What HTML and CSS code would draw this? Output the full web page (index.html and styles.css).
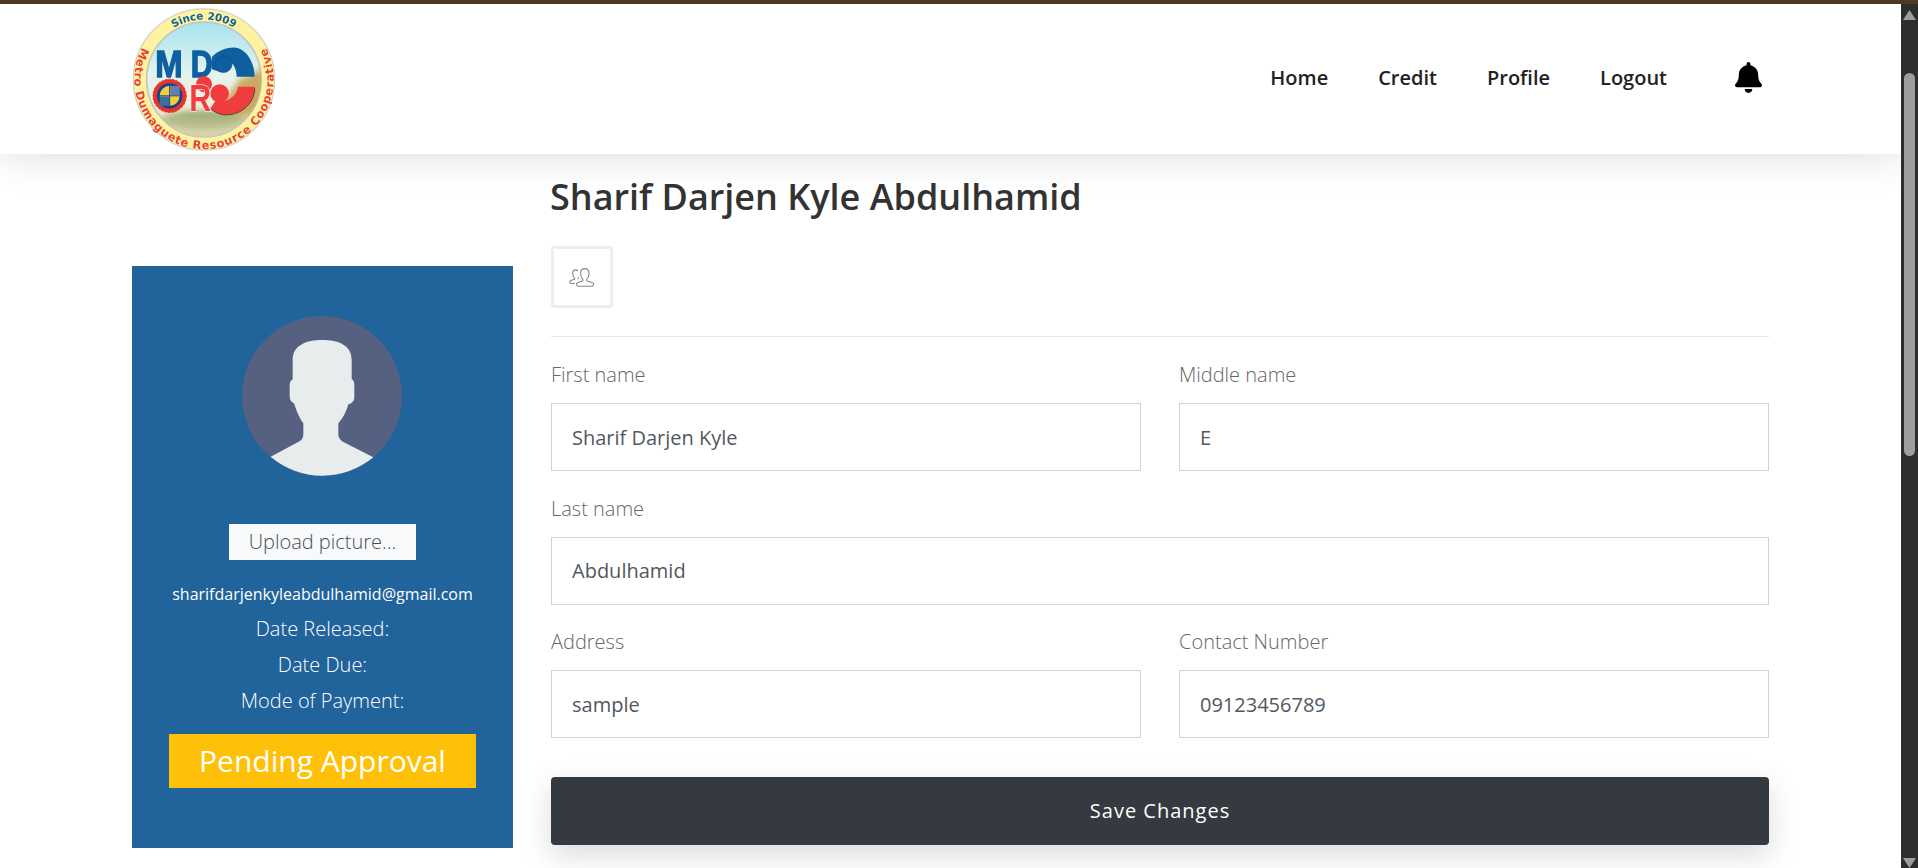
FILE: index.html
```html
<!DOCTYPE html>
<html lang="en">
<head>
<meta charset="utf-8">
<title>Profile</title>
<link rel="stylesheet" href="styles.css">
</head>
<body>
<div class="top-strip"></div>
<div class="window">
  <div class="page">
    <header class="site-header">
      <div class="header-inner">
        <svg class="logo" viewBox="25 22 426 428" aria-label="Metro Dumaguete Resource Cooperative logo">
          <defs>
            <clipPath id="innerClip"><circle cx="238" cy="236" r="172"/></clipPath>
            <linearGradient id="sky" x1="0" y1="0" x2="0" y2="1">
              <stop offset="0" stop-color="#a6e3f0"/>
              <stop offset="0.45" stop-color="#e4f3ee"/>
              <stop offset="0.7" stop-color="#f2eeda"/>
              <stop offset="1" stop-color="#d9d3ae"/>
            </linearGradient>
            <filter id="soft"><feGaussianBlur stdDeviation="10"/></filter>
            <filter id="crisp"><feGaussianBlur stdDeviation="1.5"/></filter>
            <path id="sinceArc" d="M58 236A180 180 0 0 1 418 236"/>
            <path id="nameArc" d="M55 135A209 209 0 1 0 421 135"/>
          </defs>
          <g filter="url(#crisp)">
            <circle cx="238" cy="236" r="212" fill="#fdf3a0" stroke="#d4d4c6" stroke-width="4"/>
            <circle cx="238" cy="236" r="172" fill="url(#sky)" stroke="#c4c6c0" stroke-width="5"/>
            <g clip-path="url(#innerClip)">
              <g filter="url(#soft)">
                <path d="M300 300L345 235L420 200V345H300Z" fill="#c9aa64"/>
                <ellipse cx="235" cy="358" rx="125" ry="26" fill="#7d9a55"/>
                <path d="M110 345H370L340 420H140Z" fill="#d8d2a8" opacity="0.6"/>
              </g>
            </g>
            <text class="logo-md" x="92" y="228" textLength="82" lengthAdjust="spacingAndGlyphs">M</text>
            <text class="logo-md" x="198" y="228" textLength="66" lengthAdjust="spacingAndGlyphs">D</text>
            <path d="M262 168C282 148 305 140 328 140C365 142 390 185 390 228H336C336 208 328 190 316 182L290 215L262 205Z" fill="#0c5f9f"/>
            <circle cx="297" cy="190" r="25" fill="#0c5f9f" stroke="#0a4c80" stroke-width="2"/>
            <path d="M390 258C390 307 350 342 305 342C285 342 268 334 258 322L275 295C285 300 300 302 312 296C328 288 338 275 340 258Z" fill="#f23d3f"/>
            <path d="M258 323C268 334 285 342 305 342C350 342 390 307 390 262" fill="none" stroke="#5a3a3a" stroke-width="3"/>
            <circle cx="285" cy="278" r="28" fill="#f23d3f"/>
            <circle cx="238" cy="250" r="24" fill="#f23d3f"/>
            <text class="logo-r" x="194" y="330" textLength="66" lengthAdjust="spacingAndGlyphs">R</text>
            <circle cx="135" cy="285" r="50" fill="#e2352f" stroke="#e2352f" stroke-width="3" stroke-dasharray="6 5"/>
            <circle cx="135" cy="285" r="38" fill="#173f8a"/>
            <circle cx="135" cy="285" r="30" fill="#f0cf3c"/>
            <path d="M137 255H165V283H137Z" fill="#5f80b4"/>
            <path d="M105 287H133V315H105Z" fill="#3a6ea5"/>
            <path d="M135 254V316M104 285H166" stroke="#173f8a" stroke-width="3"/>
            <text class="logo-since"><textPath href="#sinceArc" startOffset="50%" text-anchor="middle">Since 2009</textPath></text>
            <text class="logo-name"><textPath href="#nameArc" startOffset="5" textLength="855" lengthAdjust="spacing">Metro Dumaguete Resource Cooperative</textPath></text>
          </g>
        </svg>
        <nav class="main-nav">
          <a class="nav-link" href="#">Home</a>
          <a class="nav-link" href="#">Credit</a>
          <a class="nav-link" href="#">Profile</a>
          <a class="nav-link" href="#">Logout</a>
          <a class="nav-bell" href="#" aria-label="Notifications">
            <svg class="bell-icon" viewBox="0 0 448 512"><path d="M224 512c35.32 0 63.97-28.65 63.97-64H160.03c0 35.35 28.65 64 63.97 64zm215.39-149.71c-19.32-20.76-55.47-51.99-55.47-154.29 0-77.7-54.48-139.9-127.94-155.16V32c0-17.67-14.32-32-31.98-32s-31.98 14.33-31.98 32v20.84C118.56 68.1 64.08 130.3 64.08 208c0 102.3-36.15 133.53-55.47 154.29-6 6.45-8.66 14.16-8.61 21.71.11 16.4 12.98 32 32.1 32h383.8c19.12 0 32-15.6 32.1-32 .05-7.55-2.61-15.27-8.61-21.71z"/></svg>
          </a>
        </nav>
      </div>
    </header>

    <main class="content">
      <aside class="profile-card">
        <svg class="avatar" viewBox="351 168 480 480" aria-label="Profile picture">
          <circle cx="591" cy="408" r="240" fill="#566080"/>
          <path fill="#e7ecec" d="M503 300C503 255 545 240 591 240C640 240 680 255 680 300L680 358C688 362 688 370 688 380L688 410C688 425 680 430 670 433C662 462 650 478 640 490L640 522C640 535 648 542 655 546L745 592A240 240 0 0 1 437 590L525 543C532 538 535 532 535 522L535 490C525 478 515 455 507 430C498 425 494 420 494 405L494 378C494 368 496 362 503 358Z"/>
        </svg>
        <label class="upload-btn">Upload picture...</label>
        <p class="card-email">sharifdarjenkyleabdulhamid@gmail.com</p>
        <p class="card-line card-line-first">Date Released:</p>
        <p class="card-line">Date Due:</p>
        <p class="card-line">Mode of Payment:</p>
        <div class="status-badge">Pending Approval</div>
      </aside>

      <section class="profile-main">
        <h2 class="profile-name">Sharif Darjen Kyle Abdulhamid</h2>
        <div class="tab-icon">
          <svg class="people-icon" viewBox="0 0 26 19">
            <path d="M6 15.5H2.2C1.2 15.5.8 14.8.8 14.1C.8 13.3 1.2 12.8 2 12.5L5.3 11.2C5.6 11 5.7 10.7 5.7 10.3C4.4 9 3.7 7.5 3.7 5.5C3.7 3 5.1 1.9 6.6 1.9C7.5 1.9 8.3 2.2 8.9 2.9M9.5 9.5C9.5 10 9.3 10.6 8.8 11"/>
            <path d="M9 18.2C8 18.2 7.5 17.4 7.5 16.6C7.5 15.6 8.1 15 9 14.6L13.4 12.9C13.9 12.6 14 12.2 14 11.6C12.6 10.2 11.6 8 11.6 5.6C11.6 2 13.6.6 15.8.6C18 .6 20 2 20 5.6C20 8 19 10.2 17.6 11.6C17.6 12.2 17.7 12.6 18.2 12.9L23 14.6C24 15 24.6 15.6 24.6 16.6C24.6 17.4 24 18.2 23 18.2Z"/>
          </svg>
        </div>
        <hr class="divider">
        <form class="profile-form">
          <div class="field">
            <label class="field-label">First name</label>
            <input class="field-input" type="text" value="Sharif Darjen Kyle">
          </div>
          <div class="field">
            <label class="field-label">Middle name</label>
            <input class="field-input" type="text" value="E">
          </div>
          <div class="field field-wide">
            <label class="field-label">Last name</label>
            <input class="field-input" type="text" value="Abdulhamid">
          </div>
          <div class="field">
            <label class="field-label">Address</label>
            <input class="field-input" type="text" value="sample">
          </div>
          <div class="field">
            <label class="field-label">Contact Number</label>
            <input class="field-input" type="text" value="09123456789">
          </div>
          <button class="save-btn" type="button">Save Changes</button>
        </form>
      </section>
    </main>
  </div>
  <div class="scrollbar" aria-hidden="true">
    <div class="scroll-arrow-up"></div>
    <div class="scroll-thumb"></div>
    <div class="scroll-arrow-down"></div>
  </div>
</div>
</body>
</html>
```

FILE: styles.css
```css
* {
  box-sizing: border-box;
}

html,
body {
  margin: 0;
  height: 100%;
  overflow: hidden;
  background: #fff;
}

body {
  display: flex;
  flex-direction: column;
  font-family: "Open Sans", "Noto Sans", sans-serif;
  color: #495057;
}

.top-strip {
  height: 4px;
  flex: none;
  background: #4e3a22;
}

.window {
  flex: 1;
  display: flex;
  min-height: 0;
}

.page {
  flex: 1;
  min-width: 0;
  overflow: hidden;
}

/* Header */
.site-header {
  position: relative;
  z-index: 2;
  height: 150px;
  background: #fff;
  box-shadow: 0 0 40px rgba(0, 0, 0, 0.15);
}

.header-inner {
  height: 100%;
  margin: 0 132px;
  display: flex;
  align-items: center;
  justify-content: space-between;
}

.logo {
  width: 142px;
  height: 143px;
  margin-left: 1px;
}

.logo-md {
  font: 700 112px "Liberation Sans", sans-serif;
  fill: #0c5f9f;
  stroke: #0c5f9f;
  stroke-width: 4px;
}

.logo-r {
  font: 700 110px "Liberation Sans", sans-serif;
  fill: #f23d3f;
  stroke: #fff;
  stroke-width: 3px;
  paint-order: stroke;
}

.logo-since {
  font: 700 31px "DejaVu Sans", sans-serif;
  fill: #0c5f9f;
}

.logo-name {
  font: 700 34px "DejaVu Sans", sans-serif;
  fill: #e8403a;
}

.main-nav {
  display: flex;
  align-items: center;
  margin-right: 7px;
}

.nav-link {
  margin-right: 50px;
  padding-bottom: 3px;
  font-size: 20px;
  font-weight: 600;
  color: #222;
  text-decoration: none;
}

.nav-bell {
  display: block;
  width: 27px;
  height: 31px;
  margin-left: 18px;
  margin-top: -3px;
}

.bell-icon {
  display: block;
  width: 27px;
  height: 31px;
  fill: #000;
}

/* Content layout */
.content {
  display: grid;
  grid-template-columns: 381px 1218px;
  column-gap: 38px;
  align-items: start;
  padding: 0 132px;
}

/* Profile card */
.profile-card {
  margin-top: 112px;
  height: 582px;
  padding-top: 50px;
  background: #21639b;
  display: flex;
  flex-direction: column;
  align-items: center;
  color: #fff;
}

.avatar {
  display: block;
  flex: none;
  width: 160px;
  height: 160px;
  margin-right: 1px;
}

.upload-btn {
  display: block;
  margin-top: 48px;
  width: 187px;
  height: 36px;
  background: #f8f9fa;
  color: #495057;
  font-size: 20px;
  font-weight: 300;
  line-height: 35px;
  text-align: center;
}

.card-email {
  margin: 16px 0 0;
  font-size: 16px;
  line-height: 36px;
}

.card-line {
  margin: 0;
  font-size: 20px;
  font-weight: 300;
  line-height: 36px;
}

.card-line-first {
  margin-top: -1px;
}

.status-badge {
  margin-top: 15px;
  width: 307px;
  height: 54px;
  background: #ffc107;
  color: #fff;
  font-size: 30px;
  font-weight: 400;
  line-height: 54px;
  text-align: center;
}

/* Main column */
.profile-main {
  padding-top: 21px;
}

.profile-name {
  margin: 0;
  font-size: 36px;
  font-weight: 600;
  line-height: 43px;
  color: #333;
  margin-left: -1px;
}

.tab-icon {
  width: 62px;
  height: 62px;
  margin-top: 28px;
  border: 3px solid #eee;
  border-radius: 3px;
  display: flex;
  align-items: center;
  justify-content: center;
}

.people-icon {
  width: 26px;
  height: 19px;
  fill: none;
  stroke: #858585;
  stroke-width: 1.1;
}

.divider {
  margin: 28px 0 0;
  border: 0;
  border-top: 1px solid #e4e7ea;
}

.profile-form {
  display: grid;
  grid-template-columns: 1fr 1fr;
  column-gap: 38px;
  row-gap: 23.5px;
  padding-top: 24px;
}

.field-wide {
  grid-column: 1 / -1;
}

.field-label {
  display: block;
  margin-bottom: 15px;
  font-size: 20px;
  font-weight: 300;
  line-height: 27px;
  color: #666;
}

.field-input {
  display: block;
  width: 100%;
  height: 68px;
  padding: 0 20px;
  border: 1px solid #ced4da;
  background: #fff;
  font-family: inherit;
  font-size: 20px;
  font-weight: 400;
  color: #52585e;
  outline: none;
}

.save-btn {
  grid-column: 1 / -1;
  height: 68px;
  margin-top: 15.5px;
  padding-bottom: 3px;
  border: 0;
  border-radius: 4px;
  background: #343a40;
  color: #fff;
  font-family: inherit;
  font-size: 20px;
  font-weight: 500;
  letter-spacing: 1px;
  box-shadow: 0 10px 30px rgba(0, 0, 0, 0.15);
}

/* Scrollbar */
.scrollbar {
  flex: none;
  width: 17px;
  background: #2e2e2e;
  display: flex;
  flex-direction: column;
  align-items: center;
  padding-top: 6px;
}

.scroll-arrow-up {
  flex: none;
  width: 13px;
  height: 10px;
  background: #9e9e9e;
  clip-path: polygon(50% 0, 100% 100%, 0 100%);
}

.scroll-thumb {
  flex: none;
  width: 11px;
  height: 383px;
  margin-top: 53px;
  border-radius: 6px;
  background: #9e9e9e;
}

.scroll-arrow-down {
  flex: none;
  width: 13px;
  height: 10px;
  margin-top: auto;
  background: #9e9e9e;
  clip-path: polygon(0 0, 100% 0, 50% 100%);
}
```
